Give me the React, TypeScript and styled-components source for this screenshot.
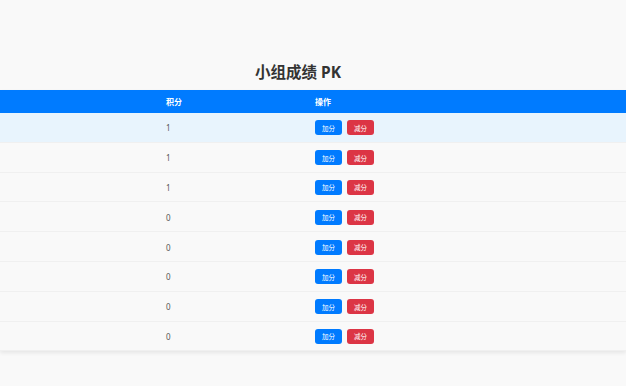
import styled, {createGlobalStyle} from 'styled-components';

const GlobalStyle = createGlobalStyle`
  html, body {
    margin: 0;
    padding: 0;
    background: #f9f9f9;
    font-family: "Noto Sans", "Noto Sans CJK SC", sans-serif;
  }
`;

const Page = styled.div`
  width: 626px;
  height: 386px;
  overflow: hidden;
  display: flex;
  flex-direction: column;
  padding-top: 58px;
  box-sizing: border-box;
`;

const Title = styled.h1`
  margin: 0 30px 0 0;
  height: 32px;
  text-align: center;
  font-size: 15.5px;
  font-weight: bold;
  color: #333;
  line-height: 29px;
`;

const Table = styled.div`
  display: flex;
  flex-direction: column;
  box-shadow: 0 2px 4px rgba(0, 0, 0, 0.08);
`;

const HeadRow = styled.div`
  display: grid;
  grid-template-columns: 158px 149px 1fr;
  height: 23px;
  align-items: center;
  background: #007bff;
  color: #fff;
  font-size: 8px;
  font-weight: bold;
`;

const Row = styled.div<{$active?: boolean}>`
  display: grid;
  grid-template-columns: 158px 149px 1fr;
  height: 29.8px;
  padding-top: 1px;
  align-items: center;
  background: ${p => (p.$active ? '#e8f4fd' : '#f9f9f9')};
  border-bottom: 1px solid #f0f0f0;
  box-sizing: border-box;
  color: #555;
  font-size: 8px;
`;

const Cell = styled.div`
  padding-left: 8px;
  display: flex;
  align-items: center;
  gap: 5px;
`;

const Btn = styled.button<{$danger?: boolean}>`
  width: 27px;
  height: 15px;
  padding: 0;
  border: none;
  border-radius: 3px;
  background: ${p => (p.$danger ? '#dc3545' : '#007bff')};
  color: #fff;
  font-family: inherit;
  font-size: 6.5px;
  cursor: pointer;
`;

const scores = [1, 1, 1, 0, 0, 0, 0, 0];

export default function App() {
  return (
    <Page>
      <GlobalStyle />
      <Title>小组成绩 PK</Title>
      <Table>
        <HeadRow>
          <Cell />
          <Cell>积分</Cell>
          <Cell>操作</Cell>
        </HeadRow>
        {scores.map((s, i) => (
          <Row key={i} $active={i === 0}>
            <Cell />
            <Cell>{s}</Cell>
            <Cell>
              <Btn>加分</Btn>
              <Btn $danger>减分</Btn>
            </Cell>
          </Row>
        ))}
      </Table>
    </Page>
  );
}
